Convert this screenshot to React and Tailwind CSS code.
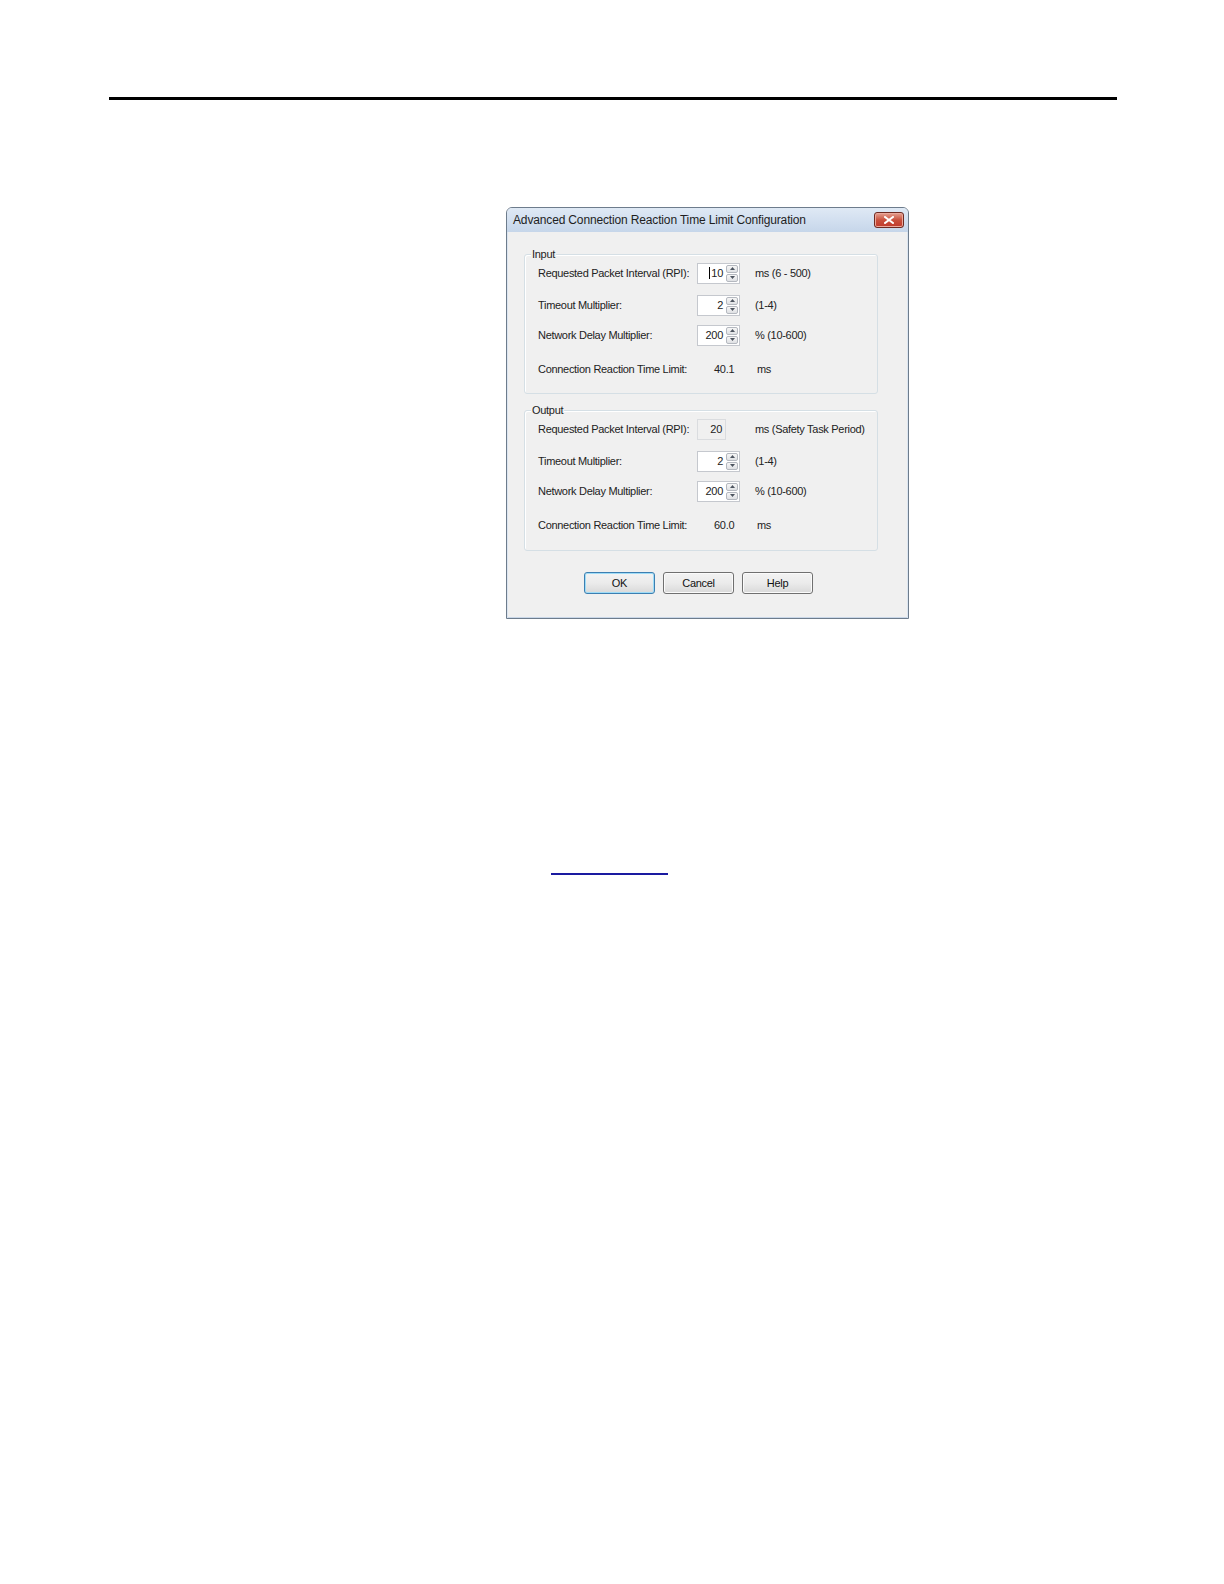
function Spinner({ value, caret }) {
  return (
    <div className="flex h-[21px] w-[43px]">
      <div className="flex w-[28px] items-center justify-end border border-[#c5c8ce] border-r-0 bg-white pr-[2px]">
        {caret && <span className="mr-[1px] inline-block h-[12px] w-[1px] bg-black" />}
        <span>{value}</span>
      </div>
      <div className="flex w-[15px] flex-col gap-[1px] border border-l-0 border-[#c5c8ce] bg-white p-[1px]">
        <div className="flex flex-1 items-center justify-center rounded-[2px] border border-[#b4b8bf] bg-gradient-to-b from-[#f6f6f6] to-[#dfe1e4]">
          <svg width="5" height="3" viewBox="0 0 5 3">
            <path d="M0 3 L2.5 0 L5 3 Z" fill="#4d5560" />
          </svg>
        </div>
        <div className="flex flex-1 items-center justify-center rounded-[2px] border border-[#b4b8bf] bg-gradient-to-b from-[#f6f6f6] to-[#dfe1e4]">
          <svg width="5" height="3" viewBox="0 0 5 3">
            <path d="M0 0 L2.5 3 L5 0 Z" fill="#4d5560" />
          </svg>
        </div>
      </div>
    </div>
  );
}

function Row({ label, control, unit, className }) {
  return (
    <div className={"flex h-[22px] items-center " + (className || "")}>
      <div className="w-[159px] shrink-0">{label}</div>
      <div className="w-[43px] shrink-0">{control}</div>
      <div className="ml-[15px]">{unit}</div>
    </div>
  );
}

function Group({ title, children }) {
  return (
    <div className="relative ml-[17px] w-[354px] rounded-[3px] border border-[#d5dfe5] shadow-[inset_1px_1px_0_#ffffff]">
      <span className="absolute -top-[8px] left-[6px] bg-[#f0f0f0] px-[1px] leading-[14px]">
        {title}
      </span>
      <div className="pl-[13px]">{children}</div>
    </div>
  );
}

function Btn({ children, primary }) {
  return (
    <button
      className={
        "h-[22px] w-[71px] rounded-[3px] border bg-gradient-to-b from-[#f3f3f3] via-[#ebebeb] to-[#d9d9d9] text-[11px] text-[#111] " +
        (primary
          ? "border-[#3c7fb1] shadow-[inset_0_0_0_1px_#9fdcf7]"
          : "border-[#707070] shadow-[inset_0_0_0_1px_#fbfbfb]")
      }
    >
      {children}
    </button>
  );
}

function Dialog() {
  return (
    <div className="ml-[506px] mt-[107px] flex h-[412px] w-[403px] flex-col rounded-t-[6px] border border-[#6d7c8c] bg-[#f0f0f0] font-['Liberation_Sans',Arial,sans-serif] text-[11px] tracking-[-0.3px] text-[#222] shadow-[inset_1px_0_0_#dbe5f1,inset_-1px_0_0_#dbe5f1,inset_0_-1px_0_#c9d7e8]">
      <div className="flex h-[24px] items-center justify-between rounded-t-[5px] bg-gradient-to-b from-[#dfe9f5] to-[#c6d6ea] pl-[6px] pr-[4px]">
        <span className="text-[12px] tracking-[-0.15px] text-[#1e1e1e]">
          Advanced Connection Reaction Time Limit Configuration
        </span>
        <div className="flex h-[16px] w-[30px] items-center justify-center rounded-[3px] border border-[#6e2a22] bg-gradient-to-b from-[#e3a193] via-[#c9503d] to-[#c0392b] shadow-[inset_0_0_0_1px_#eba89b]">
          <svg width="10" height="8" viewBox="0 0 10 8">
            <path d="M1 1 L9 7 M9 1 L1 7" stroke="#ffffff" strokeWidth="2" strokeLinecap="square" />
          </svg>
        </div>
      </div>

      <div className="mt-[22px]">
        <Group title="Input">
          <div className="h-[138px] pt-[7px]">
            <Row label="Requested Packet Interval (RPI):" control={<Spinner value="10" caret />} unit="ms (6 - 500)" />
            <Row className="mt-[10px]" label="Timeout Multiplier:" control={<Spinner value="2" />} unit="(1-4)" />
            <Row className="mt-[8px]" label="Network Delay Multiplier:" control={<Spinner value="200" />} unit="% (10-600)" />
            <Row
              className="mt-[12px]"
              label="Connection Reaction Time Limit:"
              control={<div className="pl-[17px]">40.1</div>}
              unit={<span className="ml-[2px]">ms</span>}
            />
          </div>
        </Group>
      </div>

      <div className="mt-[16px]">
        <Group title="Output">
          <div className="h-[139px] pt-[7px]">
            <Row
              label="Requested Packet Interval (RPI):"
              control={
                <div className="flex h-[21px] w-[29px] items-center justify-end border border-[#dadcdf] pr-[3px]">20</div>
              }
              unit="ms (Safety Task Period)"
            />
            <Row className="mt-[10px]" label="Timeout Multiplier:" control={<Spinner value="2" />} unit="(1-4)" />
            <Row className="mt-[8px]" label="Network Delay Multiplier:" control={<Spinner value="200" />} unit="% (10-600)" />
            <Row
              className="mt-[12px]"
              label="Connection Reaction Time Limit:"
              control={<div className="pl-[17px]">60.0</div>}
              unit={<span className="ml-[2px]">ms</span>}
            />
          </div>
        </Group>
      </div>

      <div className="ml-[77px] mt-[21px] flex gap-[8px]">
        <Btn primary>OK</Btn>
        <Btn>Cancel</Btn>
        <Btn>Help</Btn>
      </div>
    </div>
  );
}

export default function App() {
  return (
    <div className="h-[1584px] w-full overflow-hidden bg-white pt-[97px]">
      <div className="ml-[109px] h-[3px] w-[1008px] bg-black" />
      <Dialog />
      <div className="ml-[551px] mt-[254px] h-[2px] w-[117px] bg-[#1a1aa0]" />
    </div>
  );
}
